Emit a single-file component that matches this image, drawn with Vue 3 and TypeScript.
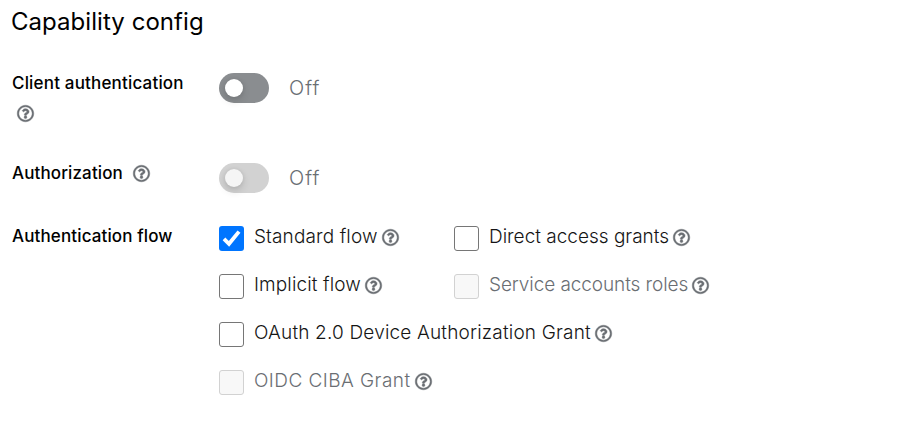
<script setup lang="ts">
import { h, ref } from 'vue'

interface FlowOption {
  id: string
  label: string
  checked: boolean
  disabled: boolean
  wide: boolean
}

const iconPath =
  'M256 8C119.043 8 8 119.083 8 256c0 136.997 111.043 248 248 248s248-111.003 248-248C504 119.083 392.957 8 256 8zm0 448c-110.532 0-200-89.431-200-200 0-110.495 89.472-200 200-200 110.491 0 200 89.471 200 200 0 110.53-89.431 200-200 200zm107.244-255.2c0 67.052-72.421 68.084-72.421 92.863V300c0 6.627-5.373 12-12 12h-45.647c-6.627 0-12-5.373-12-12v-8.659c0-35.745 27.1-50.034 47.579-61.516 17.561-9.845 28.324-16.541 28.324-29.579 0-17.246-21.999-28.693-39.784-28.693-23.189 0-33.894 10.977-48.942 29.969-4.057 5.12-11.46 6.071-16.666 2.124l-27.824-21.098c-5.107-3.872-6.251-11.066-2.644-16.363C184.846 131.491 214.94 112 261.794 112c49.071 0 101.45 38.304 101.45 88.8zM298 368c0 23.159-18.841 42-42 42s-42-18.841-42-42 18.841-42 42-42 42 18.841 42 42z'

const HelpIcon = () =>
  h('svg', { viewBox: '0 0 512 512', width: 17, height: 17, fill: '#6a6e73', stroke: '#6a6e73', 'stroke-width': 14, 'aria-hidden': 'true' }, [
    h('path', { d: iconPath }),
  ])

const clientAuth = ref(false)
const authorization = ref(false)

const flows = ref<FlowOption[]>([
  { id: 'standard', label: 'Standard flow', checked: true, disabled: false, wide: false },
  { id: 'direct', label: 'Direct access grants', checked: false, disabled: false, wide: false },
  { id: 'implicit', label: 'Implicit flow', checked: false, disabled: false, wide: false },
  { id: 'service', label: 'Service accounts roles', checked: false, disabled: true, wide: false },
  { id: 'device', label: 'OAuth 2.0 Device Authorization Grant', checked: false, disabled: false, wide: true },
  { id: 'ciba', label: 'OIDC CIBA Grant', checked: false, disabled: true, wide: true },
])

function toggle(flow: FlowOption) {
  if (!flow.disabled) flow.checked = !flow.checked
}
</script>

<template>
  <main class="page">
    <h1 class="title"><span>Capability config</span></h1>

    <section class="row client">
      <div class="label stacked">
        <span class="name client-name">Client authentication</span>
        <HelpIcon class="help" />
      </div>
      <div class="switch" @click="clientAuth = !clientAuth">
        <span class="track"><span class="knob"></span></span>
        <span class="state">{{ clientAuth ? 'On' : 'Off' }}</span>
      </div>
    </section>

    <section class="row authz">
      <div class="label">
        <span class="name authz-name">Authorization</span>
        <HelpIcon class="help" />
      </div>
      <div class="switch disabled">
        <span class="track"><span class="knob"></span></span>
        <span class="state">{{ authorization ? 'On' : 'Off' }}</span>
      </div>
    </section>

    <section class="row flow-row">
      <div class="label flow-label"><span class="name flow-name">Authentication flow</span></div>
      <div class="flows">
        <div
          v-for="flow in flows"
          :key="flow.id"
          class="flow"
          :class="[flow.id, { disabled: flow.disabled, wide: flow.wide }]"
          @click="toggle(flow)"
        >
          <span class="box" :class="{ checked: flow.checked }">
            <svg v-if="flow.checked" viewBox="0 0 25 25" width="25" height="25">
              <path d="M5 12.8 10 17.8 20 5.6" fill="none" stroke="#fff" stroke-width="3.8" />
            </svg>
          </span>
          <span class="text">{{ flow.label }}</span>
          <HelpIcon class="help" />
        </div>
      </div>
    </section>
  </main>
</template>

<style>
body {
  background: #fff;
}
</style>

<style scoped>
.page {
  height: 434px;
  box-sizing: border-box;
  padding: 5px 12px 0;
  font-family: Inter, 'Open Sans', sans-serif;
  color: #151515;
  white-space: nowrap;
  overflow: hidden;
}
.title {
  margin: 0 0 0 -1px;
  height: 67px;
  font-size: 24px;
  line-height: 34px;
  font-weight: 400;
  letter-spacing: 0.05px;
  color: #000;
}
.row {
  display: grid;
  grid-template-columns: 207px 1fr;
  align-items: start;
}
.client {
  height: 90px;
}
.authz {
  height: 64px;
}
.label {
  display: flex;
  align-items: center;
  gap: 10px;
  font-size: 17px;
  line-height: 22px;
  font-weight: 500;
  color: #000;
}
.client-name {
  letter-spacing: 0.18px;
}
.authz-name {
  letter-spacing: 0.12px;
}
.flow-name {
  letter-spacing: 0.13px;
}
.flow-label {
  margin-top: -1px;
}
.stacked {
  flex-direction: column;
  align-items: flex-start;
  gap: 11px;
}
.stacked .help {
  margin-left: 5px;
}
.help {
  display: block;
  flex: none;
  overflow: visible;
}
.switch {
  display: flex;
  align-items: center;
  gap: 20px;
  padding-top: 1px;
}
.track {
  width: 50px;
  height: 30px;
  box-sizing: border-box;
  padding: 6px;
  border-radius: 15px;
  background: #8a8d90;
}
.knob {
  display: block;
  width: 18px;
  height: 18px;
  border-radius: 50%;
  background: #fff;
  box-shadow: 0 4px 8px rgba(3, 3, 3, 0.14), 0 0 4px rgba(3, 3, 3, 0.08);
}
.disabled .track {
  background: #d2d2d2;
}
.disabled .knob {
  background: #f5f5f5;
}
.state {
  padding-top: 1px;
  font-size: 20px;
  line-height: 29px;
  font-weight: 300;
  letter-spacing: 1px;
  color: #6a6e73;
}
.flows {
  display: grid;
  grid-template-columns: 235px 1fr;
  grid-auto-rows: 48px;
}
.flow {
  display: flex;
  align-items: flex-start;
}
.wide {
  grid-column: 1 / -1;
}
.box {
  width: 25px;
  height: 25px;
  box-sizing: border-box;
  border: 1.5px solid #767676;
  border-radius: 3px;
  flex: none;
}
.box.checked {
  border: 0;
  background: #0075ff;
}
.box svg {
  display: block;
}
.disabled .box {
  border-color: #d2d2d2;
  background: #f8f8f8;
}
.text {
  margin: -4px 4px 0 10px;
  font-size: 19px;
  line-height: 30px;
  font-weight: 300;
}
.standard .text {
  letter-spacing: 0.12px;
}
.implicit .text {
  letter-spacing: 0.12px;
}
.service .text {
  letter-spacing: -0.09px;
}
.device .text {
  letter-spacing: 0.18px;
}
.ciba .text {
  letter-spacing: 0.45px;
}
.flow .help {
  margin-top: 3px;
}
.disabled .text {
  color: #6a6e73;
}
</style>
